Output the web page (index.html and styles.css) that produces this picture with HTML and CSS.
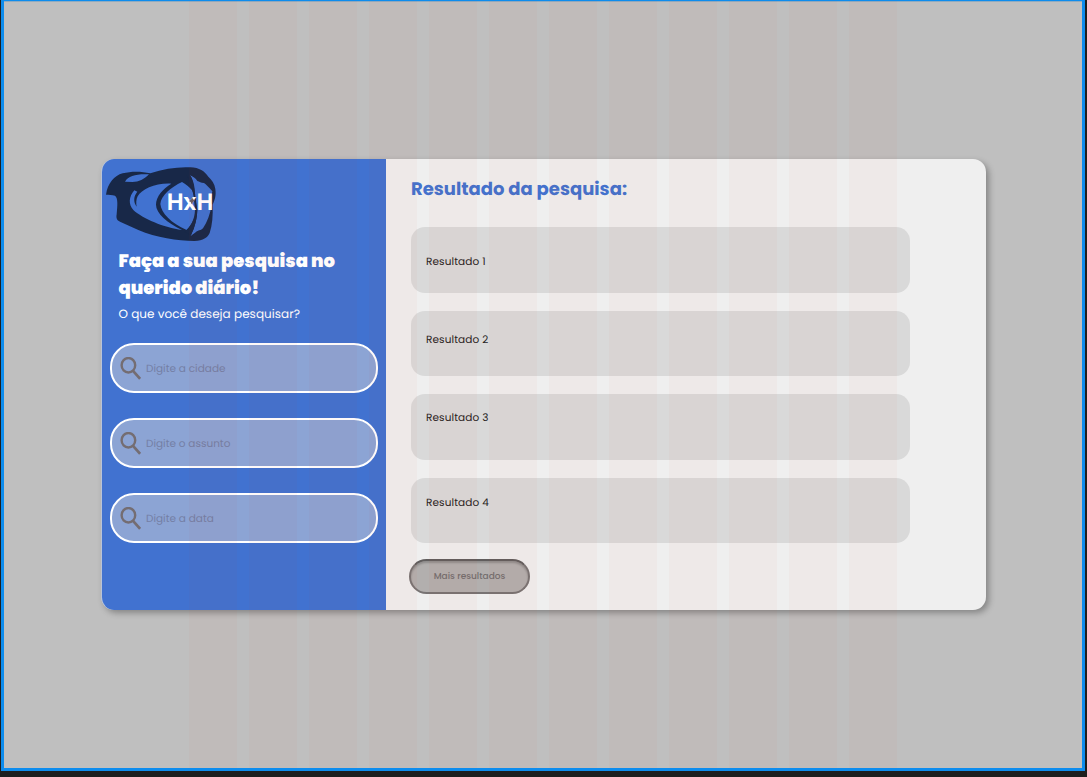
FILE: index.html
```html
<!DOCTYPE html>
<html lang="pt-BR">
<head>
<meta charset="utf-8">
<title>Querido diário</title>
<link rel="stylesheet" href="styles.css">
</head>
<body>
<svg class="defs" width="0" height="0"><symbol id="search" viewBox="0 0 20 22"><ellipse cx="8" cy="7.9" rx="6.5" ry="6.9" fill="none" stroke="currentColor" stroke-width="2.3"/><path d="M12.2 13 19.2 20.8" fill="none" stroke="currentColor" stroke-width="2.6"/></symbol></svg>
<div class="frame">
  <main class="card">
    <aside class="sidebar">
      <svg class="logo" viewBox="30 48 336 228">
        <path class="logo-shape" fill-rule="evenodd" d="M33 134C38 100 58 77 83 70C110 63 140 64 166 70C205 56 250 50 286 52C313 53 329 64 340 80C350 89 359 101 361 117C364 137 359 151 353 164C354 196 352 225 344 249C337 264 326 271 298 273C248 273 184 263 130 240L75 215C65 211 63 204 65 193C67 168 70 145 60 137C51 134 42 134 33 134Z
        M90 95C100 77 126 71 162 73C148 88 132 96 112 96Z
        M118 121C101 141 100 163 115 180C143 206 207 233 261 240C217 218 183 190 183 164C183 139 204 116 229 101C184 98 140 117 128 139C123 149 123 160 125 170C114 155 116 138 127 125Z
        M261 96C228 112 198 136 196 162C199 190 228 219 275 240C292 223 301 202 304 180C300 157 299 137 291 121C284 111 272 103 261 96Z
        M285 76C298 96 300 135 307 180C306 209 300 227 287 258L303 246C310 240 316 243 324 235C337 215 345 193 350 165C344 151 350 135 352 124C342 112 333 103 327 99C318 99 313 95 307 93C302 84 293 80 285 76Z"/>
        <path class="logo-blade" d="M274 76C288 94 293 120 296 140L300 180C299 210 286 232 268 246L288 256C301 230 306 205 307 180L300 140C300 115 297 92 285 76Z"/>
        <text class="logo-text" x="215" y="181" textLength="140" lengthAdjust="spacingAndGlyphs">HxH</text>
        <path class="logo-spark" d="M281 153 288 149 291 141 294 148 300 151 294 156 290 163 287 156Z"/>
      </svg>
      <h1 class="title">Faça a sua pesquisa no<br>querido diário!</h1>
      <p class="subtitle">O que você deseja pesquisar?</p>
      <div class="fields">
        <label class="field"><svg class="icon"><use href="#search"/></svg><span>Digite a cidade</span></label>
        <label class="field"><svg class="icon"><use href="#search"/></svg><span>Digite o assunto</span></label>
        <label class="field"><svg class="icon"><use href="#search"/></svg><span>Digite a data</span></label>
      </div>
    </aside>
    <section class="results">
      <h2 class="heading">Resultado da pesquisa:</h2>
      <div class="list">
        <article class="result first">Resultado 1</article>
        <article class="result second">Resultado 2</article>
        <article class="result third">Resultado 3</article>
        <article class="result fourth">Resultado 4</article>
      </div>
      <button class="more">Mais resultados</button>
    </section>
  </main>
  <div class="grid"><i></i><i></i><i></i><i></i><i></i><i></i><i></i><i></i><i></i><i></i><i></i><i></i></div>
</div>
</body>
</html>
```
FILE: styles.css
```css
* { box-sizing: border-box; }
body {
  margin: 0;
  height: 777px;
  padding: 0 2px 6px 1px;
  overflow: hidden;
  background: #1e1e1e;
  font-family: Poppins, Inter, "Open Sans", sans-serif;
  text-rendering: geometricPrecision;
}
.defs { position: absolute; }
.frame {
  position: relative;
  height: 771px;
  padding: 158px 0 0 97px;
  border: 3px solid #0d8ced;
  border-top-width: 1px;
  background: #bfbfbf;
  box-shadow: inset 0 1px #8fabc0;
}
.card {
  display: flex;
  width: 885px;
  height: 450.5px;
  border-radius: 13px;
  overflow: hidden;
  background: #efefef;
  border-left: 1px solid #b9c3d6;
  box-shadow: 3px 3px 6px rgba(0, 0, 0, .3);
}
.sidebar {
  width: 284px;
  flex: none;
  background: #4172d0;
  color: #fff;
}
.logo {
  display: block;
  width: 112px;
  height: 76px;
  margin: 7px 0 0 3px;
}
.logo-shape, .logo-blade { fill: #182848; }
.logo-spark { fill: #665c62; }
.logo-text { fill: #fff; font: 600 71px Poppins, Inter, sans-serif; }
.title {
  margin: 6px 0 0 16.5px;
  font-size: 18px;
  font-weight: 900;
  line-height: 27px;
  white-space: nowrap;
}
.subtitle {
  margin: 1px 0 0 16.5px;
  font-size: 12px;
  letter-spacing: .03px;
  line-height: 24px;
}
.fields {
  display: grid;
  gap: 25px;
  margin: 16px 0 0 8px;
}
.field {
  display: flex;
  align-items: center;
  gap: 6px;
  width: 268px;
  height: 50px;
  padding-left: 8px;
  border: 2px solid #fff;
  border-radius: 24px;
  background: #8ca4d4;
  color: #747fa5;
  font-size: 10.5px;
}
.field span { padding-top: 2px; }
.icon { width: 21px; height: 23px; margin-right: -1px; color: #746d72; }
.results { padding: 18px 0 0 25px; }
.heading {
  margin: 0;
  color: #4472cd;
  font-size: 18px;
  font-weight: 700;
  line-height: 26px;
}
.list {
  display: grid;
  gap: 18px;
  margin-top: 24px;
}
.result {
  width: 499px;
  height: 65.5px;
  padding-left: 15px;
  border-radius: 14px;
  background: #d9d9d9;
  color: #272323;
  font-size: 10.5px;
  letter-spacing: .1px;
  line-height: 16px;
}
.first { padding-top: 27px; }
.second { padding-top: 21px; }
.third { padding-top: 15.5px; }
.fourth { padding-top: 17px; }
.more {
  display: block;
  width: 121px;
  height: 35px;
  margin: 15.5px 0 0 -2px;
  padding: 0;
  border: 2px solid #777373;
  border-top-color: #605d5d;
  border-radius: 18px;
  background: #b2afae;
  box-shadow: inset 0 2px 2px rgba(0, 0, 0, .2);
  color: #736e6e;
  font: 500 9px Poppins, Inter, sans-serif;
}
/* Twelve-column layout guide drawn over the artboard */
.grid {
  position: absolute;
  inset: 0;
  display: grid;
  grid-template-columns: repeat(12, 48px);
  gap: 12px;
  padding-left: 185px;
}
.grid i { background: rgba(210, 50, 30, .03); }
```
